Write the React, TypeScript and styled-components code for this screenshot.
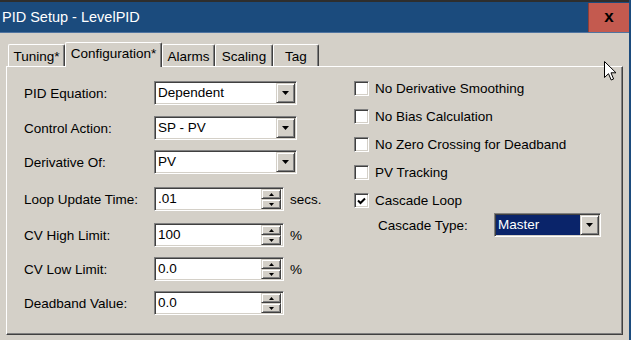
import * as React from "react";
import styled, { createGlobalStyle } from "styled-components";

const GlobalStyle = createGlobalStyle`
  html, body {
    margin: 0;
    padding: 0;
  }
  body {
    font-family: "Liberation Sans", Arial, sans-serif;
    font-size: 13.5px;
    color: #000;
    background: #d4d0c8;
  }
`;

const Window = styled.div`
  position: relative;
  width: 631px;
  height: 340px;
  box-sizing: border-box;
  border-right: 2px solid #1b4b7d;
  background: #d4d0c8;
  display: flex;
  flex-direction: column;
  overflow: hidden;
`;

const TitleBar = styled.div`
  height: 33px;
  box-sizing: border-box;
  border-top: 2px solid #2e2e2e;
  border-bottom: 1px solid #4f74a0;
  background: #1b4b7d;
  display: flex;
  align-items: stretch;
  justify-content: space-between;
  padding-left: 2px;
`;

const Title = styled.span`
  align-self: center;
  color: #fff;
  font-size: 14.5px;
  padding-bottom: 1px;
`;

const CloseButton = styled.div`
  width: 41px;
  margin-top: 1px;
  box-sizing: border-box;
  background: #c45a4f;
  border-left: 1px solid #8e3f37;
  display: flex;
  align-items: center;
  justify-content: center;
  font-size: 17px;
  font-weight: bold;
  line-height: 1;
  padding-bottom: 2px;
`;

const Body = styled.div`
  flex: 1;
  display: flex;
  flex-direction: column;
  padding: 8px 6px 5px 6px;
`;

const TabStrip = styled.div`
  height: 25px;
  display: flex;
  align-items: flex-end;
  padding-left: 2px;
`;

const Tab = styled.div<{ $w: number; $active?: boolean }>`
  position: relative;
  width: ${(p) => p.$w}px;
  height: ${(p) => (p.$active ? 25 : 22)}px;
  margin-bottom: ${(p) => (p.$active ? -1 : 0)}px;
  z-index: ${(p) => (p.$active ? 1 : 0)};
  box-sizing: border-box;
  background: #d4d0c8;
  border-top: 1px solid #fff;
  border-left: 1px solid #fff;
  border-right: 1px solid #404040;
  box-shadow: inset -1px 0 #808080;
  border-radius: 2px 2px 0 0;
  display: flex;
  justify-content: center;
  padding-top: ${(p) => (p.$active ? 3 : 4)}px;
`;

const Panel = styled.div`
  flex: 1;
  box-sizing: border-box;
  border: 1px solid;
  border-color: #fff #404040 #404040 #fff;
  box-shadow: inset -1px -1px #808080;
  display: flex;
  padding: 14px 0 0 17px;
`;

const LeftColumn = styled.div`
  width: 330px;
  display: flex;
  flex-direction: column;
`;

const FieldRow = styled.div<{ $gap: number }>`
  height: 24px;
  margin-top: ${(p) => p.$gap}px;
  display: flex;
  align-items: center;
`;

const Label = styled.span<{ $w: number }>`
  width: ${(p) => p.$w}px;
  flex-shrink: 0;
  padding-top: 1px;
`;

const Sunken = styled.div<{ $w: number }>`
  width: ${(p) => p.$w}px;
  height: 24px;
  box-sizing: border-box;
  border: 1px solid;
  border-color: #808080 #fff #fff #808080;
  box-shadow: inset 1px 1px #404040, inset -1px -1px #d4d0c8;
  background: #fff;
  padding: 1px;
  display: flex;
`;

const FieldText = styled.div<{ $selected?: boolean }>`
  flex: 1;
  line-height: 20px;
  padding-left: 2px;
  background: ${(p) => (p.$selected ? "#0a246a" : "transparent")};
  color: ${(p) => (p.$selected ? "#fff" : "#000")};
`;

const RaisedButton = styled.div`
  box-sizing: border-box;
  background: #d4d0c8;
  border: 1px solid;
  border-color: #d4d0c8 #404040 #404040 #d4d0c8;
  box-shadow: inset 1px 1px #fff, inset -1px -1px #808080;
  display: flex;
  align-items: center;
  justify-content: center;
`;

const DropButton = styled(RaisedButton)`
  width: 19px;
  height: 20px;
`;

const SpinColumn = styled.div`
  width: 20px;
  display: flex;
  flex-direction: column;
  margin-right: 1px;
`;

const SpinButton = styled(RaisedButton)`
  height: 10px;
`;

const Unit = styled.span`
  margin-left: 6px;
  padding-top: 1px;
`;

const RightColumn = styled.div`
  display: flex;
  flex-direction: column;
`;

const CheckRow = styled.div`
  height: 15px;
  margin-bottom: 13px;
  display: flex;
  align-items: center;
`;

const CheckBox = styled.div`
  width: 15px;
  height: 15px;
  box-sizing: border-box;
  border: 1px solid;
  border-color: #808080 #fff #fff #808080;
  box-shadow: inset 1px 1px #404040, inset -1px -1px #d4d0c8;
  background: #fff;
  display: flex;
  align-items: center;
  justify-content: center;
  margin-right: 6px;
`;

const SubRow = styled.div`
  display: flex;
  align-items: center;
  padding-left: 24px;
  margin-top: -8px;
`;

const Cursor = styled.svg`
  position: absolute;
  left: 604px;
  top: 61px;
`;

const Arrow = ({ up, small }: { up?: boolean; small?: boolean }) => {
  const w = small ? 5 : 7;
  const h = small ? 3 : 4;
  const pts = up ? `0,${h} ${w},${h} ${w / 2},0` : `0,0 ${w},0 ${w / 2},${h}`;
  return (
    <svg width={w} height={h} viewBox={`0 0 ${w} ${h}`}>
      <polygon points={pts} fill="#000" />
    </svg>
  );
};

const Combo = ({ value, w, selected }: { value: string; w: number; selected?: boolean }) => (
  <Sunken $w={w}>
    <FieldText $selected={selected}>{value}</FieldText>
    <DropButton>
      <Arrow />
    </DropButton>
  </Sunken>
);

const Spin = ({ value }: { value: string }) => (
  <Sunken $w={130}>
    <FieldText>{value}</FieldText>
    <SpinColumn>
      <SpinButton>
        <Arrow up small />
      </SpinButton>
      <SpinButton>
        <Arrow small />
      </SpinButton>
    </SpinColumn>
  </Sunken>
);

const Check = ({ label, checked }: { label: string; checked?: boolean }) => (
  <CheckRow>
    <CheckBox>
      {checked && (
        <svg width="9" height="8" viewBox="0 0 9 8">
          <path d="M1 3.5 L3.5 6 L8 1.5" fill="none" stroke="#000" strokeWidth="2" />
        </svg>
      )}
    </CheckBox>
    <span>{label}</span>
  </CheckRow>
);

const tabs = [
  { name: "Tuning*", w: 57 },
  { name: "Configuration*", w: 97, active: true },
  { name: "Alarms", w: 53 },
  { name: "Scaling", w: 58 },
  { name: "Tag", w: 46 },
];

export default function App() {
  return (
    <>
      <GlobalStyle />
      <Window>
        <TitleBar>
          <Title>PID Setup - LevelPID</Title>
          <CloseButton>x</CloseButton>
        </TitleBar>
        <Body>
          <TabStrip>
            {tabs.map((t) => (
              <Tab key={t.name} $w={t.w} $active={t.active}>
                {t.name}
              </Tab>
            ))}
          </TabStrip>
          <Panel>
            <LeftColumn>
              <FieldRow $gap={0}>
                <Label $w={130}>PID Equation:</Label>
                <Combo value="Dependent" w={143} />
              </FieldRow>
              <FieldRow $gap={11}>
                <Label $w={130}>Control Action:</Label>
                <Combo value="SP - PV" w={143} />
              </FieldRow>
              <FieldRow $gap={10}>
                <Label $w={130}>Derivative Of:</Label>
                <Combo value="PV" w={143} />
              </FieldRow>
              <FieldRow $gap={13}>
                <Label $w={130}>Loop Update Time:</Label>
                <Spin value=".01" />
                <Unit>secs.</Unit>
              </FieldRow>
              <FieldRow $gap={12}>
                <Label $w={130}>CV High Limit:</Label>
                <Spin value="100" />
                <Unit>%</Unit>
              </FieldRow>
              <FieldRow $gap={10}>
                <Label $w={130}>CV Low Limit:</Label>
                <Spin value="0.0" />
                <Unit>%</Unit>
              </FieldRow>
              <FieldRow $gap={10}>
                <Label $w={130}>Deadband Value:</Label>
                <Spin value="0.0" />
              </FieldRow>
            </LeftColumn>
            <RightColumn>
              <Check label="No Derivative Smoothing" />
              <Check label="No Bias Calculation" />
              <Check label="No Zero Crossing for Deadband" />
              <Check label="PV Tracking" />
              <Check label="Cascade Loop" checked />
              <SubRow>
                <Label $w={116}>Cascade Type:</Label>
                <Combo value="Master" w={107} selected />
              </SubRow>
            </RightColumn>
          </Panel>
        </Body>
        <Cursor width="13" height="21" viewBox="0 0 13 21">
          <path
            d="M0.5 0.5 L0.5 16.5 L4.5 12.7 L7.2 19 L9.6 18 L7 11.8 L12 11.8 Z"
            fill="#fff"
            stroke="#000"
            strokeWidth="1"
          />
        </Cursor>
      </Window>
    </>
  );
}
